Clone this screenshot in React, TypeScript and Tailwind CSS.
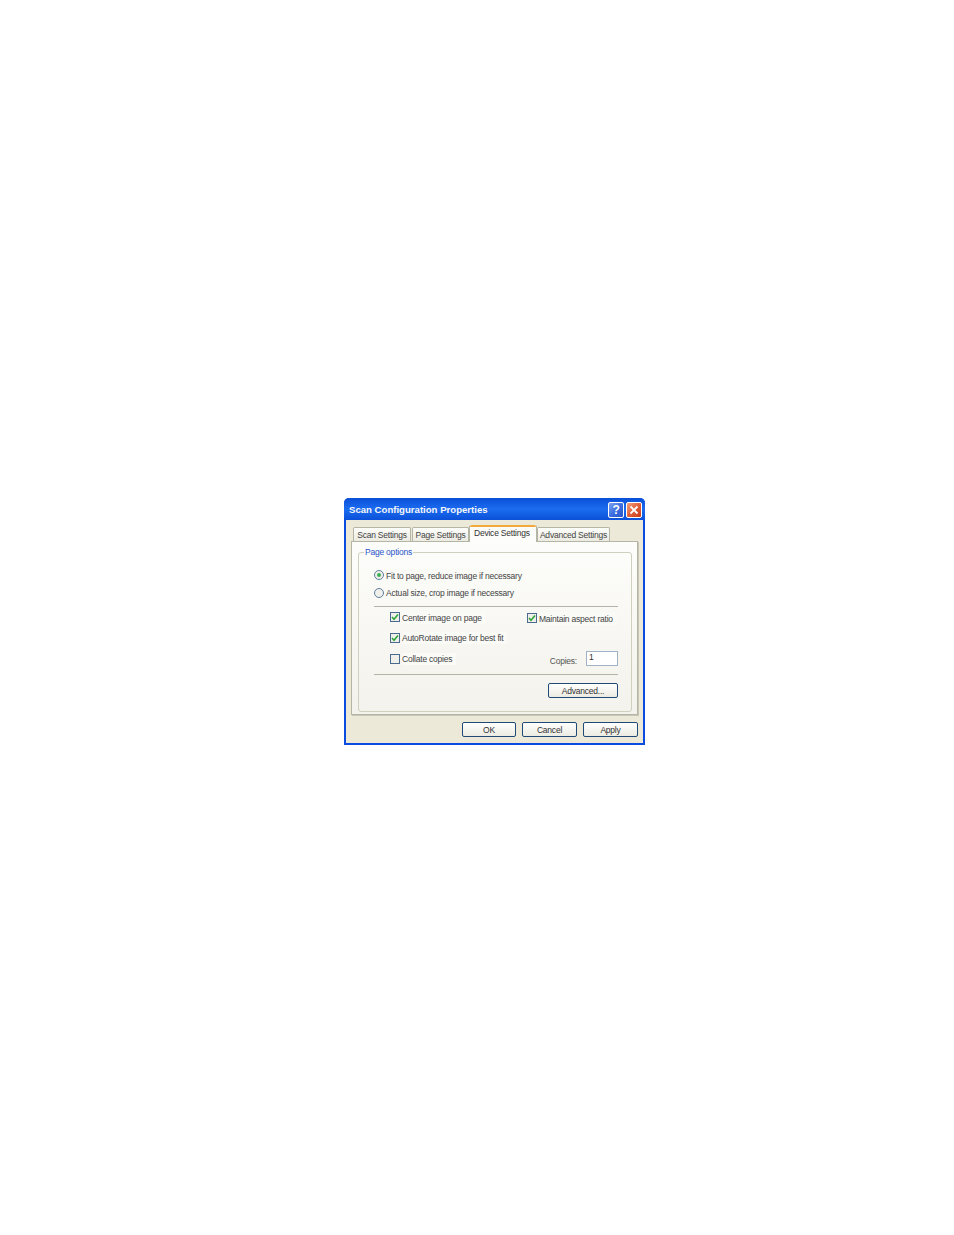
import type { ReactNode } from "react";

function TitleButton({ kind }: { kind: "help" | "close" }) {
  const bg =
    kind === "help"
      ? "bg-gradient-to-br from-[#7fa4f0] via-[#3d6fe0] to-[#2a55c8]"
      : "bg-gradient-to-br from-[#f0a080] via-[#e0603a] to-[#c83a18]";
  return (
    <div
      className={`flex h-[16px] w-[16px] items-center justify-center rounded-[2px] border border-white ${bg}`}
    >
      {kind === "help" ? (
        <span className="text-[12px] font-bold leading-none text-white">?</span>
      ) : (
        <svg width="10" height="10" viewBox="0 0 10 10">
          <path d="M1.5 1.5 8.5 8.5M8.5 1.5 1.5 8.5" stroke="#fff" strokeWidth="1.8" />
        </svg>
      )}
    </div>
  );
}

function Tab({ label, width, active }: { label: string; width: string; active?: boolean }) {
  if (active) {
    return (
      <div
        className={`z-10 -mb-px flex h-[17px] flex-col rounded-t-[2px] border-x border-[#b5b5a6] bg-[#fcfcfa] ${width}`}
      >
        <div className="h-[2px] rounded-t-[2px] bg-[#f0a93a]" />
        <div className="pl-[4px] pt-[1px] leading-[11px] text-[#333]">{label}</div>
      </div>
    );
  }
  return (
    <div
      className={`flex h-[14px] items-center justify-center rounded-t-[2px] border border-b-0 border-[#b5b5a6] bg-gradient-to-b from-[#fdfdfb] to-[#ecebe2] pt-[1px] text-[#444] ${width}`}
    >
      {label}
    </div>
  );
}

function Label({ children, low }: { children: ReactNode; low?: boolean }) {
  return (
    <span
      className={`whitespace-nowrap bg-[#fafaf7] pr-[4px] leading-[12px] text-[#444] ${low ? "pt-[1px]" : ""}`}
    >
      {children}
    </span>
  );
}

function Radio({ checked, label }: { checked?: boolean; label: string }) {
  return (
    <div className="flex h-[12px] items-center gap-[2px]">
      <div className="flex h-[10px] w-[10px] items-center justify-center rounded-full border border-[#5f7d9c] bg-[#f0f0ea]">
        {checked && <div className="h-[4px] w-[4px] rounded-full bg-[#3fae56]" />}
      </div>
      <Label low={checked}>{label}</Label>
    </div>
  );
}

function Check({ checked, label, low }: { checked?: boolean; label: string; low?: boolean }) {
  return (
    <div className="flex h-[12px] items-center gap-[2px]">
      <div className="flex h-[10px] w-[10px] items-center justify-center border border-[#4a6a90] bg-[#f0f0ea]">
        {checked && (
          <svg width="8" height="8" viewBox="0 0 8 8">
            <path d="M1 4 3 6.2 7 1.6" fill="none" stroke="#2fa53a" strokeWidth="1.6" />
          </svg>
        )}
      </div>
      <Label low={low}>{label}</Label>
    </div>
  );
}

function Button({ label, width }: { label: string; width: string }) {
  return (
    <div
      className={`flex h-[15px] items-center justify-center rounded-[2px] border border-[#1f4a78] bg-gradient-to-b from-white to-[#ecebe2] pt-[1px] text-[#333] ${width}`}
    >
      {label}
    </div>
  );
}

export default function App() {
  return (
    <div className="min-h-[1235px] bg-white pl-[344px] pt-[498px] font-['Liberation_Sans',Arial,sans-serif] text-[8.5px] tracking-[-0.22px] text-[#444]">
      <div className="flex h-[247px] w-[301px] flex-col rounded-t-[5px] border-x-[2px] border-b-[2px] border-[#0a4be0] bg-[#ece9d8]">
        <div className="-mx-[2px] flex h-[22px] shrink-0 items-center justify-between rounded-t-[5px] bg-gradient-to-b from-[#0a4fd8] via-[#1c6cf0] to-[#0a50d8] pl-[5px] pr-[3px] pt-[2px]">
          <span className="text-[9.6px] font-bold tracking-normal text-[#f4f6fb]">
            Scan Configuration Properties
          </span>
          <div className="flex gap-[2px]">
            <TitleButton kind="help" />
            <TitleButton kind="close" />
          </div>
        </div>

        <div className="px-[5px] pt-[5px]">
          <div className="flex h-[16px] items-end gap-0 pl-[2px]">
            <Tab label="Scan Settings" width="w-[58px]" />
            <div className="w-px" />
            <Tab label="Page Settings" width="w-[57px]" />
            <Tab label="Device Settings" width="w-[68px]" active />
            <Tab label="Advanced Settings" width="w-[73px]" />
          </div>

          <div className="h-[174px] w-[287px] border border-[#b5b5a6] bg-gradient-to-b from-[#fdfdfb] to-[#f3f2ec] px-[6px] pt-[10px] shadow-[1px_1px_0_#c8c6b6]">
            <div className="relative h-[160px] w-[274px] rounded-[3px] border border-[#d0d0bf] px-[15px] pt-[16px]">
              <span className="absolute -top-[6px] left-[5px] bg-[#fcfcfa] px-[1px] leading-[11px] text-[#2a55c8]">
                Page options
              </span>

              <Radio checked label="Fit to page, reduce image if necessary" />
              <div className="mt-[6px]">
                <Radio label="Actual size, crop image if necessary" />
              </div>
              <div className="mt-[7px] h-px w-[244px] bg-[#b5b5a6]" />

              <div className="ml-[16px] mt-[4px] flex w-[228px] justify-between">
                <Check checked low label="Center image on page" />
                <div className="mt-px w-[91px]">
                  <Check checked low label="Maintain aspect ratio" />
                </div>
              </div>
              <div className="ml-[16px] mt-[8px]">
                <Check checked label="AutoRotate image for best fit" />
              </div>

              <div className="ml-[16px] mt-[7px] flex h-[15px] w-[228px] items-start justify-between">
                <div className="mt-[2px]">
                  <Check label="Collate copies" />
                </div>
                <div className="flex items-start gap-[9px]">
                  <span className="mt-[4px] leading-[12px] text-[#555]">Copies:</span>
                  <div className="h-[15px] w-[32px] border border-[#9fb2c6] bg-white pl-[2px] leading-[11px] text-[#333]">
                    1
                  </div>
                </div>
              </div>

              <div className="mt-[8px] h-px w-[244px] bg-[#b5b5a6]" />
              <div className="mt-[8px] flex w-[244px] justify-end">
                <Button label="Advanced..." width="w-[70px]" />
              </div>
            </div>
          </div>

          <div className="mt-[7px] flex w-[287px] justify-end gap-[6px]">
            <Button label="OK" width="w-[54px]" />
            <Button label="Cancel" width="w-[55px]" />
            <Button label="Apply" width="w-[55px]" />
          </div>
        </div>
      </div>
    </div>
  );
}
